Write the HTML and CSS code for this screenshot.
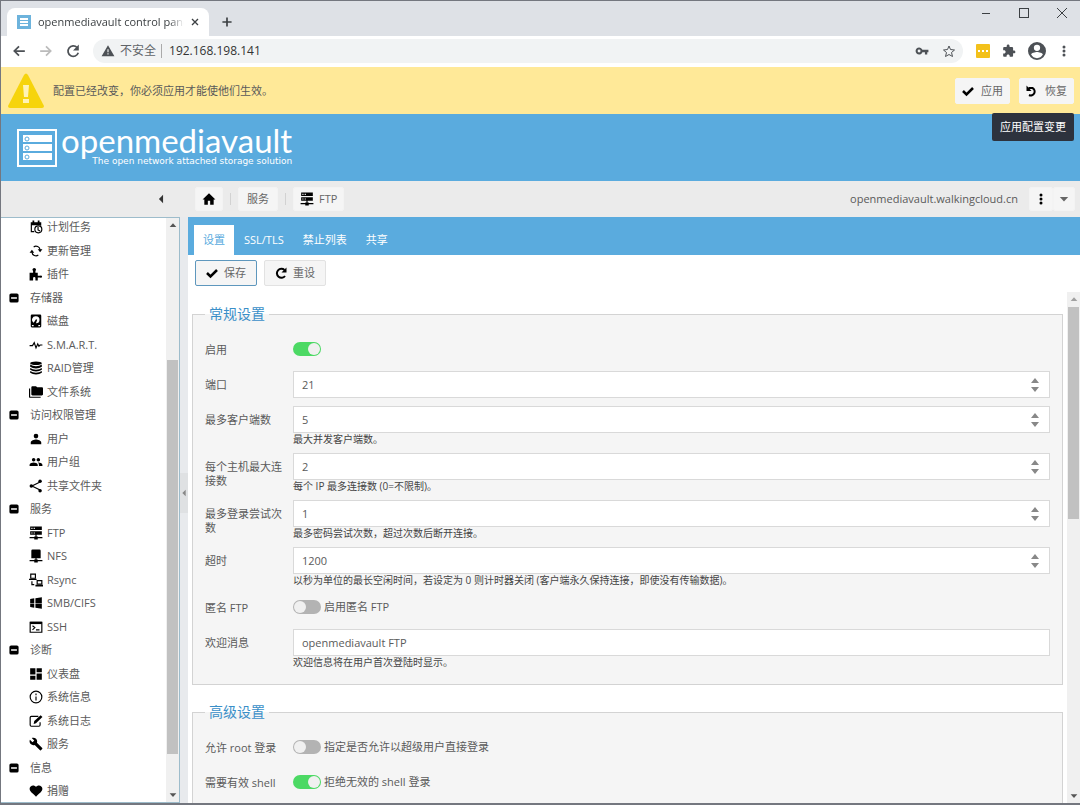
FILE: index.html
```html
<!DOCTYPE html>
<html lang="zh-CN">
<head>
    <meta charset="UTF-8">
    <meta name="viewport" content="width=device-width, initial-scale=1.0">
    <title>openmediavault control panel</title>
    <link rel="stylesheet" href="styles.css">
</head>
<body>

<!-- Icon set -->
<svg class="sprite" aria-hidden="true">
    <symbol id="i-calendar" viewBox="0 0 24 24"><path d="M3 4h3V1h3v3h6V1h3v3h3v6h-2V9H5v10h4v2H3z"/><circle cx="16" cy="16" r="6" fill="none" stroke="currentColor" stroke-width="2"/><path d="M15.500 12v5l3.500 2" fill="none" stroke="currentColor" stroke-width="2"/></symbol>
    <symbol id="i-update" viewBox="0 0 24 24"><path d="M5 14a7 7 0 0 0 11 5M19 10A7 7 0 0 0 8 5" fill="none" stroke="currentColor" stroke-width="2"/><path d="M1 15l4-5 4 5zM15 9l4 5 4-5z"/></symbol>
    <symbol id="i-plugin" viewBox="0 0 24 24"><path d="M1 10h6V7a3 3 0 1 1 4 0v3h4v5h4a2 2 0 1 1 0 3h-4v5h-4v-4a2 2 0 0 0-4 0v4H1z"/></symbol>
    <symbol id="i-disk" viewBox="0 0 24 24"><path fill-rule="evenodd" d="M5 1h14q2 0 2 2v18q0 2-2 2H5q-2 0-2-2V3q0-2 2-2zm7 3a6 6 0 0 0-4 11l4-6 2 1-2 6a6 6 0 0 0 0-12zM5 19v2h3v-2zm11 0v2h3v-2z"/></symbol>
    <symbol id="i-pulse" viewBox="0 0 24 24"><path d="M1 13h5l3-5 3 9 3-7 2 4 2-2h4" fill="none" stroke="currentColor" stroke-width="2"/></symbol>
    <symbol id="i-database" viewBox="0 0 24 24"><ellipse cx="12" cy="4" rx="10" ry="3"/><path d="M2 6q4 3 10 3t10-3v4q-4 3-10 3T2 10zM2 12q4 3 10 3t10-3v3q-4 3-10 3T2 15zM2 17q4 3 10 3t10-3v3q-4 3-10 3T2 20z"/></symbol>
    <symbol id="i-folders" viewBox="0 0 24 24"><path d="M22 4h-8l-2-2H6C4.900 2 4 2.900 4 4v12c0 1.100.900 2 2 2h16c1.100 0 2-.900 2-2V6c0-1.100-.900-2-2-2zM2 6H0v14a2 2 0 0 0 2 2h18v-2H2V6z"/></symbol>
    <symbol id="i-user" viewBox="0 0 24 24"><path d="M12 11a4 4 0 1 0 0-8 4 4 0 0 0 0 8zm0 2c-3 0-9 2-9 5v3h18v-3c0-3-6-5-9-5z"/></symbol>
    <symbol id="i-users" viewBox="0 0 24 24"><path d="M16 11c1.660 0 3-1.340 3-3s-1.340-3-3-3-3 1.340-3 3 1.340 3 3 3zm-8 0c1.660 0 3-1.340 3-3S9.660 5 8 5 5 6.340 5 8s1.340 3 3 3zm0 2c-2.330 0-7 1.170-7 3.500V19h14v-2.500C15 14.170 10.330 13 8 13zm8 0c-.290 0-.620.020-.970.050C16.190 13.890 17 15.020 17 16.500V19h6v-2.500c0-2.330-4.670-3.500-7-3.500z"/></symbol>
    <symbol id="i-share" viewBox="0 0 24 24"><path d="M19 5L5 12l14 7" fill="none" stroke="currentColor" stroke-width="2"/><circle cx="19" cy="4" r="3"/><circle cx="4" cy="12" r="3"/><circle cx="19" cy="20" r="3"/></symbol>
    <symbol id="i-server" viewBox="0 0 24 24"><path fill-rule="evenodd" d="M2 1h20v6H2zm2 2v2h2V3zm4 0v2h2V3zM2 9h20v6H2zm2 2v2h2v-2zm4 0v2h2v-2zM11 15h2v3h2v1h8v2h-8v2H9v-2H1v-2h8v-1h2z"/></symbol>
    <symbol id="i-nfs" viewBox="0 0 24 24"><path d="M4 3q0-2 2-2h12q2 0 2 2v13h-7v2h2v1h8v2h-8v2H9v-2H1v-2h8v-1h2v-2H4z"/></symbol>
    <symbol id="i-rsync" viewBox="0 0 24 24"><path d="M3 2h8v7H3zM14 13h8v6h-8z" fill="none" stroke="currentColor" stroke-width="2"/><path d="M0 10h13v2H0zM11 20h13v3H11zM4 14h2v5h3v2H4z"/></symbol>
    <symbol id="i-windows" viewBox="0 0 24 24"><path d="M2 12V5l7-1v8zM22 2v10H11V4zM2 13h7v7l-7-1zM22 13v9l-11-2v-7z"/></symbol>
    <symbol id="i-terminal" viewBox="0 0 24 24"><path d="M2 4h20v17H2z" fill="none" stroke="currentColor" stroke-width="2"/><path d="M2 3h20v4H2z"/><path d="M6 10l4 3-4 4M12 17h6" fill="none" stroke="currentColor" stroke-width="2"/></symbol>
    <symbol id="i-dashboard" viewBox="0 0 24 24"><path d="M2 13h9V2H2zM2 22h9v-7H2zM13 22h9V11h-9zM13 2v7h9V2z"/></symbol>
    <symbol id="i-info" viewBox="0 0 24 24"><circle cx="12" cy="12" r="10" fill="none" stroke="currentColor" stroke-width="2"/><path d="M11 6h2v3h-2zM11 11h2v7h-2z"/></symbol>
    <symbol id="i-log" viewBox="0 0 24 24"><path d="M16 4H4Q2 4 2 6v13q0 2 2 2h13q2 0 2-2v-5" fill="none" stroke="currentColor" stroke-width="2"/><path d="M8 17l1-5L20 2l3 3-11 11z"/></symbol>
    <symbol id="i-wrench" viewBox="0 0 24 24"><path d="M22.700 19l-9.100-9.100c.900-2.300.400-5-1.500-6.900-2-2-5-2.400-7.400-1.300L9 6 6 9 1.600 4.700C.400 7.100.900 10.100 2.900 12.100c1.900 1.900 4.600 2.400 6.900 1.500l9.100 9.100c.400.400 1 .400 1.400 0l2.300-2.300c.500-.400.500-1.100.100-1.400z"/></symbol>
    <symbol id="i-heart" viewBox="0 0 24 24"><path d="M12 22l-1.500-2C5.400 15.400 1 12.300 1 8.500 1 5 4 2.500 7 2.500c2 0 4 1 5 2.500 1-1.500 3-2.500 5-2.500 3 0 6 2.500 6 6 0 3.800-4.400 6.900-9.500 11.500z"/></symbol>
    <symbol id="i-minus" viewBox="0 0 24 24"><path fill-rule="evenodd" d="M5 1h14q4 0 4 4v14q0 4-4 4H5q-4 0-4-4V5q0-4 4-4zM5 10v4h14v-4z"/></symbol>
    <symbol id="i-home" viewBox="0 0 24 24"><path d="M10 22v-7h4v7h6v-9h3L12 2 1 13h3v9z"/></symbol>
    <symbol id="i-check" viewBox="0 0 24 24"><path d="M2 12l7 7L22 6" fill="none" stroke="currentColor" stroke-width="5"/></symbol>
    <symbol id="i-undo" viewBox="0 0 24 24"><path d="M5 6h8a7 7 0 1 1-7 14" fill="none" stroke="currentColor" stroke-width="4"/><path d="M1 1v11h10z"/></symbol>
    <symbol id="i-redo" viewBox="0 0 24 24"><path d="M19 6a9 9 0 1 0 1 12" fill="none" stroke="currentColor" stroke-width="4"/><path d="M23 1v10H13z"/></symbol>
    <symbol id="i-dots" viewBox="0 0 24 24"><circle cx="12" cy="4" r="3"/><circle cx="12" cy="12" r="3"/><circle cx="12" cy="20" r="3"/></symbol>
    <symbol id="i-down" viewBox="0 0 24 24"><path d="M2 7h20L12 18z"/></symbol>
    <symbol id="i-up" viewBox="0 0 24 24"><path d="M2 18h20L12 7z"/></symbol>
    <symbol id="i-left" viewBox="0 0 24 24"><path d="M17 2v20L7 12z"/></symbol>
    <symbol id="i-spin" viewBox="0 0 8 14"><path d="M0 5h8L4 0zM0 9h8l-4 5z"/></symbol>
    <symbol id="i-warning" viewBox="0 0 24 24"><path fill-rule="evenodd" d="M1 21h22L12 2zM11 18v-2h2v2zM11 14v-5h2v5z"/></symbol>
    <symbol id="i-back" viewBox="0 0 24 24"><path d="M22 12H4M12 4l-8 8 8 8" fill="none" stroke="currentColor" stroke-width="3"/></symbol>
    <symbol id="i-forward" viewBox="0 0 24 24"><path d="M2 12h18M12 4l8 8-8 8" fill="none" stroke="currentColor" stroke-width="3"/></symbol>
    <symbol id="i-reload" viewBox="0 0 24 24"><path d="M19 6a9 9 0 1 0 2 9" fill="none" stroke="currentColor" stroke-width="3"/><path d="M22 1v10H12z"/></symbol>
    <symbol id="i-close" viewBox="0 0 24 24"><path d="M3 3l18 18M21 3L3 21" fill="none" stroke="currentColor" stroke-width="4"/></symbol>
    <symbol id="i-add" viewBox="0 0 24 24"><path d="M12 1v22M1 12h22" fill="none" stroke="currentColor" stroke-width="4"/></symbol>
    <symbol id="i-key" viewBox="0 0 24 24"><path fill-rule="evenodd" d="M12.650 10C11.830 7.670 9.610 6 7 6c-3.310 0-6 2.690-6 6s2.690 6 6 6c2.610 0 4.830-1.670 5.650-4H17v4h4v-4h2v-4zM7 14.500A2.500 2.500 0 1 1 7 9.500a2.500 2.500 0 0 1 0 5z"/></symbol>
    <symbol id="i-star" viewBox="0 0 24 24"><path d="M12 2l3 7 8 1-6 5 2 8-7-4-7 4 2-8-6-5 8-1z" fill="none" stroke="currentColor" stroke-width="2"/></symbol>
    <symbol id="i-extension" viewBox="0 0 24 24"><path d="M20.500 11H19V7c0-1.100-.900-2-2-2h-4V3.500C13 2.120 11.880 1 10.500 1S8 2.120 8 3.500V5H4c-1.100 0-2 .900-2 2v3.800h1.500c1.490 0 2.700 1.210 2.700 2.700s-1.210 2.700-2.700 2.700H2V20c0 1.100.900 2 2 2h3.800v-1.500c0-1.490 1.210-2.700 2.700-2.700s2.700 1.210 2.700 2.700V22H17c1.100 0 2-.900 2-2v-4h1.500c1.380 0 2.500-1.120 2.500-2.500S21.880 11 20.500 11z"/></symbol>
    <symbol id="i-account" viewBox="0 0 20 20"><path fill-rule="evenodd" d="M10 0a10 10 0 1 0 0 20 10 10 0 0 0 0-20zm0 3a3.500 3.500 0 1 1 0 7 3.500 3.500 0 0 1 0-7zm0 15c-3 0-5-1.500-6.500-4 0-2 4.500-3 6.500-3s6.500 1 6.500 3c-1.500 2.500-3.500 4-6.500 4z"/></symbol>
    <symbol id="i-favicon" viewBox="0 0 14 14"><path fill="#6db3dc" d="M0 0h14v14H0z"/><path fill="#fff" d="M3 3h8v2H3zM3 6h8v2H3zM3 9h8v2H3z"/></symbol>
</svg>

<!-- Browser chrome -->
<div class="tab-strip">
    <div class="browser-tab">
        <svg class="icon-14"><use href="#i-favicon"/></svg>
        <span class="tab-title">openmediavault control panel</span>
        <button class="plain" aria-label="关闭标签页"><svg class="icon-8"><use href="#i-close"/></svg></button>
    </div>
    <button class="plain new-tab" aria-label="新标签页"><svg class="icon-10"><use href="#i-add"/></svg></button>
    <div class="window-controls">
        <button class="plain" aria-label="最小化"><svg class="icon-10" viewBox="0 0 10 10"><path d="M1 5h8v1H1z"/></svg></button>
        <button class="plain" aria-label="最大化"><svg class="icon-10" viewBox="0 0 10 10"><path fill-rule="evenodd" d="M0 0h10v10H0zM1 1v8h8V1z"/></svg></button>
        <button class="plain" aria-label="关闭"><svg class="icon-10" viewBox="0 0 10 10"><path d="M0 0l10 10M10 0L0 10" stroke="currentColor"/></svg></button>
    </div>
</div>
<div class="nav-bar">
    <button class="plain" aria-label="后退"><svg class="icon-14"><use href="#i-back"/></svg></button>
    <button class="plain disabled" aria-label="前进"><svg class="icon-14"><use href="#i-forward"/></svg></button>
    <button class="plain" aria-label="重新加载"><svg class="icon-14"><use href="#i-reload"/></svg></button>
    <div class="address">
        <svg class="icon-14"><use href="#i-warning"/></svg>
        <span class="insecure">不安全</span>
        <input type="text" value="192.168.198.141" aria-label="地址">
        <svg class="icon-14"><use href="#i-key"/></svg>
        <svg class="icon-12"><use href="#i-star"/></svg>
    </div>
    <div class="extensions">
        <svg class="icon-14" viewBox="0 0 14 14"><rect width="14" height="14" rx="1" fill="#f3c11b"/><path fill="#fff" d="M2 6h2v2H2zM6 6h2v2H6zM10 6h2v2h-2z"/></svg>
        <svg class="icon-14"><use href="#i-extension"/></svg>
        <svg class="icon-18"><use href="#i-account"/></svg>
        <svg class="icon-12"><use href="#i-dots"/></svg>
    </div>
</div>

<!-- Pending configuration notice -->
<div class="notice">
    <svg class="notice-icon" viewBox="0 0 36 36"><path fill="#f6d40c" d="M16 2q2-3 4 0l16 31q0 2-2 2H2q-2 0-2-2z"/><path fill="#fff3b5" d="M15 12h6l-1 12h-4zM15 26h6v4h-6z"/></svg>
    <p>配置已经改变，你必须应用才能使他们生效。</p>
    <div class="notice-action">
        <button class="btn"><svg class="icon-12"><use href="#i-check"/></svg>应用</button>
    </div>
    <div class="notice-action">
        <button class="btn"><svg class="icon-12"><use href="#i-undo"/></svg>恢复</button>
        <div class="tooltip" role="tooltip">应用配置变更</div>
    </div>
</div>

<header class="banner">
    <svg class="logo" viewBox="0 0 40 38"><path d="M1 1h38v36H1z" fill="none" stroke="#fff" stroke-width="2"/><path fill="#fff" d="M6 6h29v7H6zM6 15h29v7H6zM6 24h29v7H6z"/><g fill="#fff" stroke="#5aabde"><circle cx="10" cy="10" r="2"/><circle cx="10" cy="19" r="2"/><circle cx="10" cy="28" r="2"/></g></svg>
    <div class="brand">
        <div class="brand-name">openmediavault</div>
        <div class="brand-tagline">The open network attached storage solution</div>
    </div>
</header>

<div class="crumb-bar">
    <div class="nav-head">
        <button class="plain" aria-label="折叠导航"><svg class="icon-10"><use href="#i-left"/></svg></button>
    </div>
    <nav class="crumbs">
        <button class="btn flat" aria-label="首页"><svg class="icon-14"><use href="#i-home"/></svg></button>
        <span class="separator"></span>
        <button class="btn flat crumb">服务</button>
        <span class="separator"></span>
        <button class="btn flat"><svg class="icon-14"><use href="#i-server"/></svg>FTP</button>
    </nav>
    <span class="host">openmediavault.walkingcloud.cn</span>
    <div class="host-menu">
        <button class="btn flat" aria-label="菜单"><svg class="icon-12"><use href="#i-dots"/></svg></button>
        <button class="btn flat" aria-label="更多"><svg class="icon-10"><use href="#i-down"/></svg></button>
    </div>
</div>

<div class="workspace">
    <nav class="sidebar">
        <ul class="tree">
            <li><a href="#"><svg class="icon-14"><use href="#i-calendar"/></svg>计划任务</a></li>
            <li><a href="#"><svg class="icon-14"><use href="#i-update"/></svg>更新管理</a></li>
            <li><a href="#"><svg class="icon-14"><use href="#i-plugin"/></svg>插件</a></li>
            <li class="group"><svg class="icon-10"><use href="#i-minus"/></svg>存储器</li>
            <li><a href="#"><svg class="icon-14"><use href="#i-disk"/></svg>磁盘</a></li>
            <li><a href="#"><svg class="icon-14"><use href="#i-pulse"/></svg>S.M.A.R.T.</a></li>
            <li><a href="#"><svg class="icon-14"><use href="#i-database"/></svg>RAID管理</a></li>
            <li><a href="#"><svg class="icon-14"><use href="#i-folders"/></svg>文件系统</a></li>
            <li class="group"><svg class="icon-10"><use href="#i-minus"/></svg>访问权限管理</li>
            <li><a href="#"><svg class="icon-14"><use href="#i-user"/></svg>用户</a></li>
            <li><a href="#"><svg class="icon-14"><use href="#i-users"/></svg>用户组</a></li>
            <li><a href="#"><svg class="icon-14"><use href="#i-share"/></svg>共享文件夹</a></li>
            <li class="group"><svg class="icon-10"><use href="#i-minus"/></svg>服务</li>
            <li><a href="#"><svg class="icon-14"><use href="#i-server"/></svg>FTP</a></li>
            <li><a href="#"><svg class="icon-14"><use href="#i-nfs"/></svg>NFS</a></li>
            <li><a href="#"><svg class="icon-14"><use href="#i-rsync"/></svg>Rsync</a></li>
            <li><a href="#"><svg class="icon-14"><use href="#i-windows"/></svg>SMB/CIFS</a></li>
            <li><a href="#"><svg class="icon-14"><use href="#i-terminal"/></svg>SSH</a></li>
            <li class="group"><svg class="icon-10"><use href="#i-minus"/></svg>诊断</li>
            <li><a href="#"><svg class="icon-14"><use href="#i-dashboard"/></svg>仪表盘</a></li>
            <li><a href="#"><svg class="icon-14"><use href="#i-info"/></svg>系统信息</a></li>
            <li><a href="#"><svg class="icon-14"><use href="#i-log"/></svg>系统日志</a></li>
            <li><a href="#"><svg class="icon-14"><use href="#i-wrench"/></svg>服务</a></li>
            <li class="group"><svg class="icon-10"><use href="#i-minus"/></svg>信息</li>
            <li><a href="#"><svg class="icon-14"><use href="#i-heart"/></svg>捐赠</a></li>
        </ul>
        <div class="scrollbar">
            <svg class="icon-8"><use href="#i-up"/></svg>
            <div class="track"><div class="thumb" style="top: 23%; height: 71%"></div></div>
            <svg class="icon-8"><use href="#i-down"/></svg>
        </div>
    </nav>

    <div class="splitter"><div class="grip"><svg class="icon-8"><use href="#i-left"/></svg></div></div>

    <main class="panel">
        <div class="tabs" role="tablist">
            <button class="tab active" role="tab" aria-selected="true">设置</button>
            <button class="tab" role="tab">SSL/TLS</button>
            <button class="tab" role="tab">禁止列表</button>
            <button class="tab" role="tab">共享</button>
        </div>
        <div class="actions">
            <button class="btn primary"><svg class="icon-12"><use href="#i-check"/></svg>保存</button>
            <button class="btn outlined"><svg class="icon-12"><use href="#i-redo"/></svg>重设</button>
        </div>
        <div class="form-area">
            <form class="form">
                <fieldset>
                    <legend>常规设置</legend>
                    <div class="row">
                        <label for="enable">启用</label>
                        <div class="switch"><input type="checkbox" id="enable" checked></div>
                    </div>
                    <div class="row">
                        <label for="port">端口</label>
                        <div class="field"><input type="number" id="port" value="21"><svg class="spin"><use href="#i-spin"/></svg></div>
                    </div>
                    <div class="row">
                        <label for="maxclients">最多客户端数</label>
                        <div class="field"><input type="number" id="maxclients" value="5"><svg class="spin"><use href="#i-spin"/></svg></div>
                        <p class="help">最大并发客户端数。</p>
                    </div>
                    <div class="row">
                        <label for="maxhost">每个主机最大连接数</label>
                        <div class="field"><input type="number" id="maxhost" value="2"><svg class="spin"><use href="#i-spin"/></svg></div>
                        <p class="help">每个 IP 最多连接数 (0=不限制)。</p>
                    </div>
                    <div class="row">
                        <label for="maxlogin">最多登录尝试次数</label>
                        <div class="field"><input type="number" id="maxlogin" value="1"><svg class="spin"><use href="#i-spin"/></svg></div>
                        <p class="help">最多密码尝试次数，超过次数后断开连接。</p>
                    </div>
                    <div class="row">
                        <label for="timeout">超时</label>
                        <div class="field"><input type="number" id="timeout" value="1200"><svg class="spin"><use href="#i-spin"/></svg></div>
                        <p class="help">以秒为单位的最长空闲时间，若设定为 0 则计时器关闭 (客户端永久保持连接，即使没有传输数据)。</p>
                    </div>
                    <div class="row">
                        <label for="anonymous">匿名 FTP</label>
                        <div class="switch"><input type="checkbox" id="anonymous"><label for="anonymous">启用匿名 FTP</label></div>
                    </div>
                    <div class="row">
                        <label for="welcome">欢迎消息</label>
                        <div class="field"><input type="text" id="welcome" value="openmediavault FTP"></div>
                        <p class="help">欢迎信息将在用户首次登陆时显示。</p>
                    </div>
                </fieldset>
                <fieldset>
                    <legend>高级设置</legend>
                    <div class="row">
                        <label for="rootlogin">允许 root 登录</label>
                        <div class="switch"><input type="checkbox" id="rootlogin"><label for="rootlogin">指定是否允许以超级用户直接登录</label></div>
                    </div>
                    <div class="row">
                        <label for="shell">需要有效 shell</label>
                        <div class="switch"><input type="checkbox" id="shell" checked><label for="shell">拒绝无效的 shell 登录</label></div>
                    </div>
                </fieldset>
            </form>
            <div class="scrollbar">
                <svg class="icon-8 at-end"><use href="#i-up"/></svg>
                <div class="track"><div class="thumb" style="top: 0%; height: 44%"></div></div>
                <svg class="icon-8"><use href="#i-down"/></svg>
            </div>
        </div>
    </main>
</div>

</body>
</html>
```
FILE: styles.css
```css
* {
    box-sizing: border-box;
}

body {
    margin: 0;
    height: 100vh;
    display: flex;
    flex-direction: column;
    overflow: hidden;
    border: 1px solid #74777f;
    border-width: 1px 0 2px 1px;
    font-family: "Open Sans", "Noto Sans CJK SC", sans-serif;
    font-size: 11px;
    line-height: 14px;
    color: #5a5a5a;
    background-color: white;
}

button, input {
    font: inherit;
    color: inherit;
}

button {
    cursor: pointer;
}

p {
    margin: 0;
}

svg {
    flex: none;
    display: block;
    fill: currentColor;
}

.sprite {
    position: absolute;
    width: 0;
    height: 0;
}

/* Icon sizes */
.icon-8 { width: 8px; height: 8px; }
.icon-10 { width: 10px; height: 10px; }
.icon-12 { width: 12px; height: 12px; }
.icon-14 { width: 14px; height: 14px; }
.icon-18 { width: 18px; height: 18px; }

.plain {
    display: flex;
    padding: 0;
    border: 0;
    background: none;
}

.disabled {
    color: #bbb;
}

/* Browser tab strip */
.tab-strip {
    flex: none;
    height: 35px;
    display: flex;
    align-items: flex-end;
    padding-left: 6px;
    background-color: #dee1e6;
    color: #3c4043;
}

.browser-tab {
    width: 202px;
    height: 28px;
    display: flex;
    align-items: center;
    gap: 7px;
    padding: 0 10px;
    border-radius: 8px 8px 0 0;
    background-color: white;
}

.tab-title {
    flex: 1;
    overflow: hidden;
    white-space: nowrap;
    mask-image: linear-gradient(to right, black 90%, transparent);
}

.new-tab {
    height: 28px;
    align-items: center;
    margin-left: 13px;
}

.window-controls {
    align-self: flex-start;
    display: flex;
    gap: 28px;
    margin-left: auto;
    padding: 7px 13px;
}

/* Browser address row */
.nav-bar {
    flex: none;
    height: 31px;
    display: flex;
    align-items: center;
    gap: 13px;
    padding: 0 0 2px 11px;
    color: #4d5156;
}

.address {
    flex: 1;
    height: 24px;
    display: flex;
    align-items: center;
    gap: 5px;
    padding: 0 8px;
    border-radius: 12px;
    background-color: #f1f3f4;
    font-size: 12px;
}

.insecure {
    color: #5f6368;
}

.address input {
    flex: 1;
    min-width: 0;
    height: 14px;
    padding: 0 0 0 7px;
    border: 0;
    border-left: 1px solid #aaa;
    background: none;
    color: #333;
}

.address .icon-12 {
    margin-left: 9px;
}

.extensions {
    display: flex;
    align-items: center;
    gap: 12px;
    padding-right: 10px;
}

/* Notice bar */
.notice {
    flex: none;
    height: 47px;
    display: flex;
    align-items: center;
    gap: 9px;
    padding: 0 6px 0 7px;
    background-color: #ffe998;
}

.notice p {
    flex: 1;
}

.notice-icon {
    width: 36px;
    height: 36px;
}

.notice-action {
    position: relative;
}

.tooltip {
    position: absolute;
    top: 35px;
    right: 0;
    z-index: 1;
    padding: 7px 8px;
    border-radius: 2px;
    white-space: nowrap;
    background-color: #2d323d;
    color: white;
}

/* Buttons */
.btn {
    height: 26px;
    display: flex;
    align-items: center;
    gap: 7px;
    padding: 0 6px;
    border: 1px solid #f5f5f5;
    border-radius: 2px;
    background-color: #f5f5f5;
    color: #666;
}

.btn svg {
    color: black;
}

.btn.flat {
    height: 24px;
    gap: 5px;
    border-color: #f3f3f3;
}

.btn.primary, .btn.outlined {
    padding: 0 10px;
    gap: 6px;
    border-color: #e2e2e2;
}

.btn.primary {
    border-color: #5e97bd;
}

/* Product header */
.banner {
    flex: none;
    height: 67px;
    display: flex;
    align-items: center;
    gap: 4px;
    padding-left: 16px;
    background-color: #5aabde;
    color: white;
}

.logo {
    width: 40px;
    height: 38px;
}

.brand-name {
    font-family: Lato, sans-serif;
    font-size: 33px;
    line-height: 20px;
}

.brand-tagline {
    margin-top: 6px;
    font-family: "DejaVu Sans", sans-serif;
    font-size: 9px;
    line-height: 10px;
    text-align: right;
}

/* Breadcrumb toolbar */
.crumb-bar {
    flex: none;
    height: 36px;
    display: flex;
    align-items: center;
    background-color: #ebebeb;
}

.nav-head {
    width: 187px;
    display: flex;
    justify-content: flex-end;
    padding-right: 22px;
    color: #333;
}

.crumbs {
    flex: 1;
    display: flex;
    align-items: center;
    gap: 7px;
    padding-left: 7px;
}

.crumbs .crumb {
    padding: 0 8px;
}

.separator {
    width: 1px;
    height: 12px;
    background-color: #d2d2d2;
}

.host-menu {
    display: flex;
    padding: 0 5px 0 11px;
}

.host-menu .btn {
    padding: 0 5px;
}

.host-menu .btn:last-child svg {
    color: #666;
}

/* Sidebar */
.workspace {
    flex: 1;
    min-height: 0;
    display: flex;
    background-color: #e8eaed;
}

.sidebar {
    flex: none;
    width: 179px;
    display: flex;
    overflow: hidden;
    border: 1px solid #9dbccb;
    border-left: 0;
    background-color: white;
}

.tree {
    flex: 1;
    margin: -3px 0 0;
    padding: 0;
    list-style: none;
}

.tree li {
    height: 23px;
    display: flex;
    align-items: center;
    padding-left: 28px;
}

.tree li:nth-child(odd) {
    height: 24px;
}

.tree a {
    display: flex;
    align-items: center;
    gap: 4px;
    color: inherit;
    text-decoration: none;
}

.tree svg {
    color: black;
}

.tree .group {
    gap: 11px;
    padding-left: 8px;
}

/* Scrollbars */
.scrollbar {
    flex: none;
    width: 13px;
    display: flex;
    flex-direction: column;
    align-items: center;
    gap: 4px;
    padding: 3px 0;
    background-color: #f0f0f0;
    color: #555;
}

.scrollbar .at-end {
    color: #a0a0a0;
}

.track {
    position: relative;
    flex: 1;
    align-self: stretch;
}

.thumb {
    position: absolute;
    left: 1px;
    right: 1px;
    background-color: #c1c1c1;
}

.splitter {
    flex: none;
    width: 8px;
    display: flex;
    align-items: center;
    color: #888;
}

.grip {
    height: 40px;
    display: flex;
    align-items: center;
    margin-top: -35px;
    background-color: #dfe1e3;
}

/* Settings panel */
.panel {
    flex: 1;
    min-width: 0;
    display: flex;
    flex-direction: column;
    background-color: white;
}

.tabs {
    flex: none;
    height: 38px;
    display: flex;
    align-items: flex-end;
    gap: 1px;
    padding-left: 6px;
    background-color: #5aabde;
}

.tab {
    height: 30px;
    padding: 0 9px;
    border: 0;
    background: none;
    color: white;
}

.tab.active {
    background-color: white;
    color: #5aabde;
}

.actions {
    flex: none;
    display: flex;
    gap: 7px;
    padding: 5px 7px 6px;
}

.form-area {
    flex: 1;
    min-height: 0;
    display: flex;
}

.form {
    flex: 1;
    min-width: 0;
    display: flex;
    flex-direction: column;
    gap: 18px;
    overflow: hidden;
    padding: 13px 4px 0;
}

fieldset {
    flex: none;
    margin: 0;
    min-width: 0;
    padding: 13px 12px 16px;
    border: 1px solid #d3d3d3;
    background-color: #f5f5f5;
}

legend {
    padding: 0 4px;
    font-size: 14px;
    line-height: 18px;
    color: #3a8fc8;
}

/* Label, control and the help text below */
.row {
    display: grid;
    grid-template-columns: 78px 1fr;
    column-gap: 10px;
    grid-template-rows: 27px;
}

.row + .row {
    margin-top: 8px;
}

.row > label {
    grid-row: 1 / span 2;
    padding-top: 7px;
}

.field {
    display: flex;
    align-items: center;
    padding-right: 10px;
    border: 1px solid #d9d9d9;
    background-color: white;
}

.field input {
    flex: 1;
    min-width: 0;
    padding: 1px 8px 0;
    border: 0;
    outline: 0;
    background: none;
    appearance: textfield;
}

.field input::-webkit-inner-spin-button {
    display: none;
}

.spin {
    width: 8px;
    height: 14px;
    color: #888;
}

.help {
    grid-column: 2;
    font-size: 10px;
    line-height: 12px;
    color: #444;
}

.switch {
    display: flex;
    align-items: center;
    gap: 3px;
    padding-bottom: 1px;
}

.switch input {
    appearance: none;
    width: 28px;
    height: 14px;
    display: flex;
    margin: 0;
    padding: 1px;
    border-radius: 7px;
    background-color: #b3b3b3;
}

.switch input::before {
    content: "";
    width: 12px;
    height: 12px;
    border-radius: 50%;
    background-color: #f0f0f0;
}

.switch input:checked {
    justify-content: flex-end;
    background-color: #4cd964;
}
```
